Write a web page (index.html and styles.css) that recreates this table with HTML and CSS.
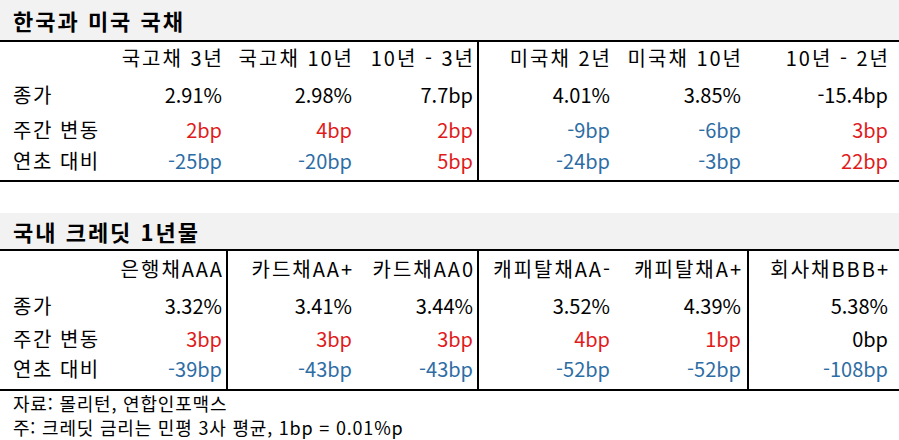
FILE: index.html
```html
<!DOCTYPE html>
<html lang="ko">
<head>
<meta charset="utf-8">
<title>한국과 미국 국채 / 국내 크레딧 1년물</title>
<link rel="stylesheet" href="styles.css">
</head>
<body>
<div class="sheet">
  <section class="block b1">
    <h2 class="title">한국과 미국 국채</h2>
    <div class="table t1">
      <div class="row rh">
        <div class="c lab"></div>
        <div class="c">국고채 3년</div>
        <div class="c">국고채 10년</div>
        <div class="c">10년 - 3년</div>
        <div class="c">미국채 2년</div>
        <div class="c">미국채 10년</div>
        <div class="c">10년 - 2년</div>
      </div>
      <div class="row ra">
        <div class="c lab">종가</div>
        <div class="c">2.91%</div>
        <div class="c">2.98%</div>
        <div class="c">7.7bp</div>
        <div class="c">4.01%</div>
        <div class="c">3.85%</div>
        <div class="c">-15.4bp</div>
      </div>
      <div class="row rb">
        <div class="c lab">주간 변동</div>
        <div class="c up">2bp</div>
        <div class="c up">4bp</div>
        <div class="c up">2bp</div>
        <div class="c dn">-9bp</div>
        <div class="c dn">-6bp</div>
        <div class="c up">3bp</div>
      </div>
      <div class="row rc">
        <div class="c lab">연초 대비</div>
        <div class="c dn">-25bp</div>
        <div class="c dn">-20bp</div>
        <div class="c up">5bp</div>
        <div class="c dn">-24bp</div>
        <div class="c dn">-3bp</div>
        <div class="c up">22bp</div>
      </div>
    </div>
  </section>

  <section class="block b2">
    <h2 class="title">국내 크레딧 1년물</h2>
    <div class="table t2">
      <div class="row rh">
        <div class="c lab"></div>
        <div class="c">은행채AAA</div>
        <div class="c">카드채AA+</div>
        <div class="c">카드채AA0</div>
        <div class="c">캐피탈채AA-</div>
        <div class="c">캐피탈채A+</div>
        <div class="c">회사채BBB+</div>
      </div>
      <div class="row ra">
        <div class="c lab">종가</div>
        <div class="c">3.32%</div>
        <div class="c">3.41%</div>
        <div class="c">3.44%</div>
        <div class="c">3.52%</div>
        <div class="c">4.39%</div>
        <div class="c">5.38%</div>
      </div>
      <div class="row rb">
        <div class="c lab">주간 변동</div>
        <div class="c up">3bp</div>
        <div class="c up">3bp</div>
        <div class="c up">3bp</div>
        <div class="c up">4bp</div>
        <div class="c up">1bp</div>
        <div class="c">0bp</div>
      </div>
      <div class="row rc">
        <div class="c lab">연초 대비</div>
        <div class="c dn">-39bp</div>
        <div class="c dn">-43bp</div>
        <div class="c dn">-43bp</div>
        <div class="c dn">-52bp</div>
        <div class="c dn">-52bp</div>
        <div class="c dn">-108bp</div>
      </div>
    </div>
    <div class="notes">
      <p class="n1">자료: 몰리턴, 연합인포맥스</p>
      <p class="n2">주: 크레딧 금리는 민평 3사 평균, 1bp = 0.01%p</p>
    </div>
  </section>
</div>
</body>
</html>
```

FILE: styles.css
```css
html, body {
  margin: 0;
  padding: 0;
  background: #ffffff;
}

.sheet {
  width: 899px;
  font-family: "Noto Sans CJK KR", "Noto Sans", sans-serif;
  color: #000000;
}

.title {
  margin: 0;
  background: #f2f2f2;
  font-size: 22px;
  font-weight: 700;
  letter-spacing: 2px;
  padding-left: 13px;
  border-bottom: 2px solid #000;
}

.b1 .title {
  height: 40px;
  line-height: 41px;
}

.b2 {
  margin-top: 31px;
}

.b2 .title {
  height: 36px;
  line-height: 37px;
}

.table {
  border-bottom: 2px solid #000;
}

.row {
  display: grid;
  grid-template-columns: 100px 126px 131px 120px 137px 133px 152px;
  font-size: 20px;
}

.c {
  box-sizing: border-box;
  text-align: right;
  white-space: nowrap;
  height: 100%;
}

.c.lab {
  text-align: left;
  padding-left: 13px;
  letter-spacing: 1.5px;
}

.rh .c {
  letter-spacing: 2px;
}

.row > :nth-child(2) { padding-right: 4px; }
.row > :nth-child(3) { padding-right: 5px; }
.row > :nth-child(4) { padding-right: 4px; }
.row > :nth-child(5) { padding-right: 4px; }
.row > :nth-child(6) { padding-right: 6px; }
.row > :nth-child(7) { padding-right: 11px; }

.rh > :nth-child(n+2) { padding-right: 2px; }
.rh > :nth-child(3) { padding-right: 3px; }
.rh > :nth-child(6) { padding-right: 4px; }
.rh > :nth-child(7) { padding-right: 9px; }

.t1 .row > :nth-child(5),
.t2 .row > :nth-child(3),
.t2 .row > :nth-child(5),
.t2 .row > :nth-child(7) {
  border-left: 2px solid #000;
}

.t1 .rh { height: 30px; line-height: 32px; }
.t1 .ra { height: 46px; line-height: 46px; }
.t1 .rb { height: 24px; line-height: 24px; }
.t1 .rc { height: 38px; line-height: 38px; }

.t2 .rh { height: 34px; line-height: 35px; }
.t2 .ra { height: 42px; line-height: 42px; }
.t2 .rb { height: 22px; line-height: 24px; }
.t2 .rc { height: 40px; line-height: 40px; }

.up { color: #e01b1b; }
.dn { color: #2e6da4; }

.notes {
  padding-left: 13px;
  font-size: 18px;
  letter-spacing: 0.8px;
}

.notes p {
  margin: 0;
}

.notes .n1 {
  line-height: 25px;
}

.notes .n2 {
  line-height: 23px;
}
```
